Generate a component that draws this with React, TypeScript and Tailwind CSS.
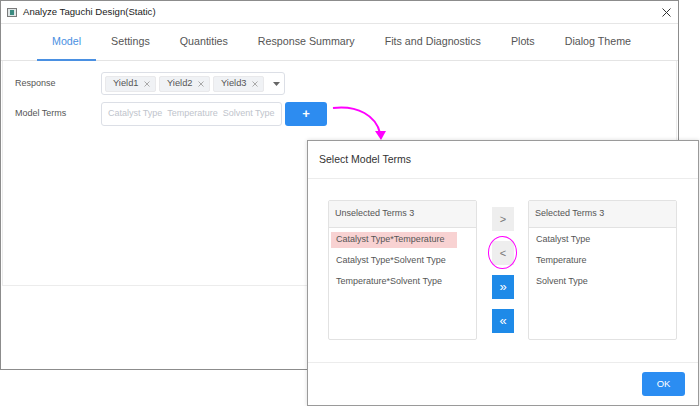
import React from "react";

const tabs = [
  "Model",
  "Settings",
  "Quantities",
  "Response Summary",
  "Fits and Diagnostics",
  "Plots",
  "Dialog Theme",
];

const unselected = [
  "Catalyst Type*Temperature",
  "Catalyst Type*Solvent Type",
  "Temperature*Solvent Type",
];
const selected = ["Catalyst Type", "Temperature", "Solvent Type"];

function Tag({ label }: { label: string }) {
  return (
    <div className="flex h-[16px] w-[51px] items-center justify-between rounded-[2px] border border-[#e9e9eb] bg-[#f0f2f5] pl-[7px] pr-[5px] text-[9.3px] text-[#555]">
      <span>{label}</span>
      <svg width="6" height="6" viewBox="0 0 6 6">
        <path d="M0.5 0.5L5.5 5.5M5.5 0.5L0.5 5.5" stroke="#a0a0a0" strokeWidth="0.9" />
      </svg>
    </div>
  );
}

function TermList({
  title,
  items,
  highlight,
}: {
  title: string;
  items: string[];
  highlight?: number;
}) {
  return (
    <div className="flex h-[140px] w-[149px] flex-col rounded-[2px] border border-[#e2e2e2]">
      <div className="flex h-[27px] items-center border-b border-[#e2e2e2] bg-[#f6f6f6] pl-[6px] text-[9px] text-[#555]">
        {title}
      </div>
      <div className="flex flex-col gap-[5px] pt-[4px]">
        {items.map((t, i) => (
          <div
            key={t}
            className={`mx-[2px] flex h-[16px] items-center pl-[5px] text-[9px] text-[#555] ${
              i === highlight ? "w-[126px] bg-[#f8d2d2]" : ""
            }`}
          >
            {t}
          </div>
        ))}
      </div>
    </div>
  );
}

function MoveButton({ children, blue }: { children: React.ReactNode; blue?: boolean }) {
  return (
    <div
      className={`flex h-[24px] w-[22px] items-center justify-center ${
        blue ? "bg-[#1e8ae8] text-[13px] text-white" : "bg-[#eeeeee] text-[11px] text-[#777]"
      }`}
    >
      {children}
    </div>
  );
}

export default function App() {
  return (
    <div className="relative h-[406px] w-[700px] overflow-hidden bg-white font-['Liberation_Sans',Arial,sans-serif]">
      {/* main window */}
      <div className="flex h-[370px] w-[679px] flex-col border border-[#8c8c8c] bg-white">
        <div className="flex h-[23px] items-center border-b border-[#e6e6e6] pl-[6px] pr-[7px]">
          <div className="mr-[6px] flex h-[9px] w-[10px] items-center justify-center border border-[#7a7a7a] bg-[#dfe6e6]">
            <div className="h-[5px] w-[4px] bg-[#3a8a80]" />
          </div>
          <span className="text-[9.6px] text-[#222]">Analyze Taguchi Design(Static)</span>
          <svg className="ml-auto" width="9" height="9" viewBox="0 0 9 9">
            <path d="M0.5 0.5L8.5 8.5M8.5 0.5L0.5 8.5" stroke="#333" strokeWidth="1" />
          </svg>
        </div>

        <div className="flex h-[37px] items-stretch border-b border-[#e4e4e4] pl-[36px]">
          {tabs.map((t, i) => (
            <div
              key={t}
              className={`-mb-px flex items-center px-[15px] text-[10.7px] ${
                i === 0
                  ? "border-b-2 border-[#4a90e2] text-[#4a90e2]"
                  : "border-b-2 border-transparent text-[#555]"
              }`}
            >
              {t}
            </div>
          ))}
        </div>

        <div className="mx-[1px] h-[225px] border border-t-0 border-[#ececec] pl-[12px] pt-[11px]">
          <div className="flex items-center">
            <div className="w-[86px] text-[9px] text-[#555]">Response</div>
            <div className="flex h-[23px] w-[184px] items-center gap-[3px] rounded-[3px] border border-[#dcdfe6] pl-[3px]">
              <Tag label="Yield1" />
              <Tag label="Yield2" />
              <Tag label="Yield3" />
              <svg className="ml-[6px]" width="7" height="4" viewBox="0 0 7 4">
                <path d="M0 0H7L3.5 4Z" fill="#666" />
              </svg>
            </div>
          </div>
          <div className="mt-[7px] flex items-center">
            <div className="w-[86px] text-[9px] text-[#555]">Model Terms</div>
            <div className="flex h-[24px] w-[181px] items-center rounded-[3px] border border-[#dcdfe6] pl-[6px] text-[9px] text-[#c0c4cc]">
              Catalyst Type&nbsp; Temperature&nbsp; Solvent Type
            </div>
            <div className="ml-[3px] flex h-[24px] w-[42px] items-center justify-center rounded-[3px] bg-[#2d8cf0] text-[13px] font-bold text-white">
              +
            </div>
          </div>
        </div>
      </div>

      {/* magenta arrow */}
      <svg className="absolute left-0 top-0" width="700" height="406" viewBox="0 0 700 406">
        <path d="M333 108 C 358 105, 376 116, 380 133" fill="none" stroke="#ff00ff" strokeWidth="2" />
        <path d="M375 131 L386 131 L381 140 Z" fill="#ff00ff" />
      </svg>

      {/* dialog */}
      <div className="absolute left-[307px] top-[140px] flex h-[266px] w-[392px] flex-col border border-[#9a9a9a] bg-white shadow-[0_0_4px_rgba(0,0,0,0.15)]">
        <div className="flex h-[38px] items-center border-b border-[#ececec] pl-[11px] text-[10.5px] text-[#333]">
          Select Model Terms
        </div>
        <div className="flex h-[184px] border-b border-[#ececec] pl-[20px] pt-[21px]">
          <TermList title="Unselected Terms 3" items={unselected} highlight={0} />
          <div className="relative ml-[15px] mr-[14px] flex flex-col gap-[10px] pt-[7px]">
            <MoveButton>&gt;</MoveButton>
            <MoveButton>&lt;</MoveButton>
            <MoveButton blue>»</MoveButton>
            <MoveButton blue>«</MoveButton>
            <div className="absolute left-[-4px] top-[36px] h-[33px] w-[29px] rounded-[50%] border-[1.5px] border-[#ff00ff]" />
          </div>
          <TermList title="Selected Terms 3" items={selected} />
        </div>
        <div className="flex flex-1 items-center justify-end pr-[13px]">
          <div className="flex h-[24px] w-[43px] items-center justify-center rounded-[3px] bg-[#2b8df2] text-[9.5px] text-white">
            OK
          </div>
        </div>
      </div>
    </div>
  );
}
